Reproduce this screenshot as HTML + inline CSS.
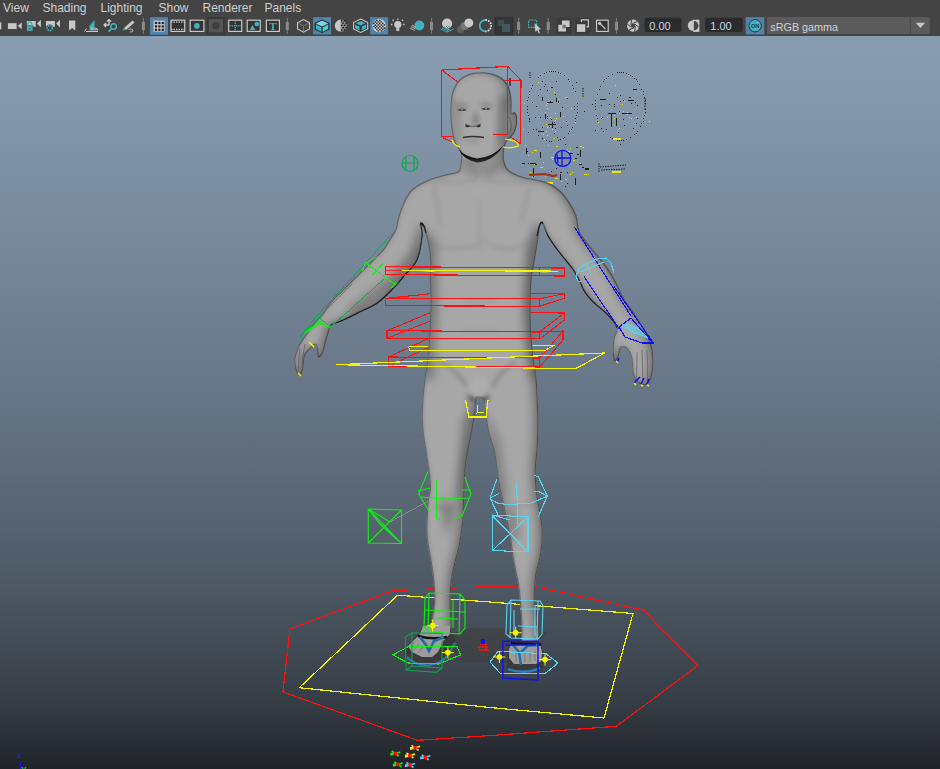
<!DOCTYPE html>
<html><head><meta charset="utf-8"><style>
html,body{margin:0;padding:0;width:940px;height:769px;overflow:hidden;background:#444;}
body{position:relative;font-family:"Liberation Sans",sans-serif;}
#bar{position:absolute;left:0;top:0;width:940px;height:36px;background:#444444;}
.m{position:absolute;top:0px;font-size:12px;color:#cccccc;line-height:14px;}
#vp{position:absolute;left:0;top:36px;width:940px;height:733px;
background:linear-gradient(to bottom,rgb(137,157,178) 0.0%,rgb(132,151,171) 8.3%,rgb(127,145,165) 16.7%,rgb(121,139,157) 25.0%,rgb(115,132,150) 33.3%,rgb(109,125,142) 41.7%,rgb(102,117,133) 50.0%,rgb(94,108,123) 58.3%,rgb(86,99,112) 66.7%,rgb(77,88,100) 75.0%,rgb(66,75,85) 83.3%,rgb(52,59,67) 91.7%,rgb(32,35,40) 100.0%);}
svg{position:absolute;left:0;top:0;}
</style></head><body>
<div id="bar"><svg width="940" height="36" viewBox="0 0 940 36" style="position:absolute;left:0;top:0">
<rect x="0" y="22.3" width="1.3" height="7" fill="#c8c8c8"/>
<rect x="7.9" y="23.2" width="8.7" height="5.8" fill="#c8c8c8"/><path d="M17.9 26.1 L21.7 22.3 L21.7 29.3 Z" fill="#c8c8c8"/>
<rect x="26.8" y="21" width="8.9" height="5.8" fill="#c8c8c8"/><path d="M37 23.6 L40.9 19.7 L40.9 27.4 Z" fill="#c8c8c8"/>
<rect x="26.5" y="25.8" width="6.5" height="5.4" fill="#3fb3c0" stroke="#444444" stroke-width="0.8"/><path d="M27.8 26 L27.8 24 A2 2 0 0 1 31.8 24 L31.8 26" fill="none" stroke="#3fb3c0" stroke-width="1.4"/><rect x="29.2" y="27.8" width="1.2" height="1.6" fill="#444444"/>
<rect x="46" y="21" width="8.9" height="5.8" fill="#c8c8c8"/><path d="M56.2 23.6 L60 19.7 L60 27.4 Z" fill="#c8c8c8"/>
<circle cx="49.8" cy="28" r="3.6" fill="#444444"/><circle cx="49.8" cy="28" r="2.6" fill="none" stroke="#3fb3c0" stroke-width="1.6" stroke-dasharray="1.6 0.8"/>
<path d="M69 20.4 L75.3 20.4 L75.3 30.6 L72.15 28 L69 30.6 Z" fill="#c8c8c8"/>
<path d="M89.5 26 L94.5 20 L94.5 27.5 L89.5 31 Z" fill="#3fb3c0"/><path d="M84.5 31.5 L86.5 28.5 M86 31.5 L98 31.5 M91 29.8 L98 29.8 L96 28.2 L91 28.2" stroke="#c8c8c8" stroke-width="1" fill="none"/>
<path d="M103.5 25 L109 25 M109 20 L109 25 M104 25 L106 23 M104 25 L106 27 M109 19.5 L107 21.5 M109 19.5 L111 21.5" stroke="#c8c8c8" stroke-width="1.4" fill="none"/><circle cx="113.6" cy="26.6" r="2.8" fill="none" stroke="#3fb3c0" stroke-width="1.4"/><path d="M111.6 28.6 L108.5 31.8" stroke="#3fb3c0" stroke-width="1.6"/>
<path d="M124 28 L132.5 20.6 L134.6 22.6 L126 30 Z" fill="#c8c8c8"/><path d="M122.7 30.6 L123.8 28 L126 30 Z" fill="#3fb3c0"/><path d="M128.5 29.5 Q131 28 133 30 Q133 32.5 130 32" fill="none" stroke="#c8c8c8" stroke-width="0.9"/>
<rect x="142.8" y="17.8" width="1.2" height="16" fill="#777"/><rect x="141.9" y="22" width="3" height="8" fill="#8a8a8a"/>
<rect x="150.1" y="17.2" width="17.9" height="17.6" fill="#5285ae"/><rect x="153.6" y="20.6" width="11" height="11" fill="#c8c8c8"/>
<rect x="154.9" y="21.9" width="2.2" height="2.2" fill="#222"/>
<rect x="154.9" y="25.3" width="2.2" height="2.2" fill="#222"/>
<rect x="154.9" y="28.7" width="2.2" height="2.2" fill="#222"/>
<rect x="158.3" y="21.9" width="2.2" height="2.2" fill="#222"/>
<rect x="158.3" y="25.3" width="2.2" height="2.2" fill="#222"/>
<rect x="158.3" y="28.7" width="2.2" height="2.2" fill="#222"/>
<rect x="161.7" y="21.9" width="2.2" height="2.2" fill="#222"/>
<rect x="161.7" y="25.3" width="2.2" height="2.2" fill="#222"/>
<rect x="161.7" y="28.7" width="2.2" height="2.2" fill="#222"/>
<rect x="171" y="20.2" width="13.7" height="11.2" fill="#333" stroke="#c8c8c8" stroke-width="1.2"/><path d="M171 22.2 L184.7 22.2 M171 29.4 L184.7 29.4" stroke="#c8c8c8" stroke-width="1.2" stroke-dasharray="1.5 1"/>
<rect x="190.2" y="20.2" width="13.7" height="11.2" fill="#333" stroke="#c8c8c8" stroke-width="1.2"/><circle cx="196.9" cy="25.9" r="2.8" fill="#3fb3c0"/>
<rect x="206.9" y="17.2" width="17.9" height="17.2" fill="#383838"/><rect x="208.7" y="19.2" width="14.3" height="13.3" fill="#555"/><circle cx="215.9" cy="25.8" r="3.8" fill="#404040"/>
<rect x="228.7" y="20.2" width="13" height="11.2" fill="#333" stroke="#c8c8c8" stroke-width="1.2"/><path d="M229.5 25.8 L241 25.8 M235.2 20.5 L235.2 31" stroke="#3fb3c0" stroke-width="1.4" stroke-dasharray="1.2 1"/>
<rect x="247.2" y="20.2" width="13" height="11.2" fill="#333" stroke="#c8c8c8" stroke-width="1.2"/><path d="M249.5 30 L252.5 25 L255.5 30 Z" fill="#3fb3c0"/><circle cx="256.8" cy="24" r="2.3" fill="#3fb3c0"/>
<rect x="266.4" y="20.2" width="13" height="11.2" fill="#333" stroke="#c8c8c8" stroke-width="1.2"/><text x="272.9" y="30.2" font-family="Liberation Serif" font-weight="bold" font-size="11" fill="#3fb3c0" text-anchor="middle">T</text>
<rect x="286.7" y="17.8" width="1.2" height="16" fill="#777"/><rect x="285.8" y="22" width="3" height="8" fill="#8a8a8a"/>
<path d="M303.5 19.6 L309.5 22.8 L309.5 29 L303.5 32.2 L297.5 29 L297.5 22.8 Z" fill="none" stroke="#c8c8c8" stroke-width="1.1"/><path d="M303.5 26 L303.5 32 M303.5 26 L297.8 23 M303.5 26 L309.3 23" stroke="#888" stroke-width="0.7"/>
<rect x="313.1" y="17.2" width="17.9" height="17.2" fill="#5285ae"/><path d="M322 19.4 L329.5 23 L329.5 29.5 L322 33 L314.6 29.5 L314.6 23 Z" fill="#222"/><path d="M322 20.5 L328.3 23.5 L322 26.5 L315.8 23.5 Z" fill="#7fd6e0"/><path d="M315.8 24.3 L321.5 27.2 L321.5 32 L315.8 29 Z" fill="#3db2c0"/><path d="M322.6 27.2 L328.3 24.3 L328.3 29 L322.6 32 Z" fill="#4ec4d2"/>
<path d="M340.9 19.6 A6.1 6.1 0 0 0 340.9 31.8 Z" fill="#c8c8c8"/><path d="M340.9 19.6 A6.1 6.1 0 0 1 340.9 31.8 Z" fill="#888"/>
<rect x="340.9" y="20.0" width="1.5" height="1.5" fill="#222"/>
<rect x="340.9" y="24.6" width="1.5" height="1.5" fill="#222"/>
<rect x="340.9" y="29.2" width="1.5" height="1.5" fill="#222"/>
<rect x="342.4" y="22.3" width="1.5" height="1.5" fill="#222"/>
<rect x="342.4" y="26.9" width="1.5" height="1.5" fill="#222"/>
<rect x="343.9" y="20.0" width="1.5" height="1.5" fill="#222"/>
<rect x="343.9" y="24.6" width="1.5" height="1.5" fill="#222"/>
<rect x="343.9" y="29.2" width="1.5" height="1.5" fill="#222"/>
<rect x="345.4" y="22.3" width="1.5" height="1.5" fill="#222"/>
<rect x="345.4" y="26.9" width="1.5" height="1.5" fill="#222"/>
<path d="M360.6 19.1 L367.7 22.6 L367.7 29 L360.6 32.5 L353.6 29 L353.6 22.6 Z" fill="#333" stroke="#c8c8c8" stroke-width="1.1"/><path d="M360.6 21 L365.5 23.3 L360.6 25.5 L355.8 23.3 Z" fill="#3fb3c0"/><path d="M355 24.5 L359.5 26.6 L359.5 30.5 L355 28.3 Z" fill="#3fb3c0"/><path d="M361.7 26.6 L366.3 24.5 L366.3 28.3 L361.7 30.5 Z" fill="#3fb3c0"/>
<rect x="370.2" y="17.2" width="17.9" height="17.2" fill="#5285ae"/><circle cx="379.1" cy="25.7" r="6.6" fill="#ddd"/>
<rect x="373.1" y="22.7" width="1.5" height="1.5" fill="#222"/>
<rect x="373.1" y="25.7" width="1.5" height="1.5" fill="#222"/>
<rect x="374.6" y="21.2" width="1.5" height="1.5" fill="#222"/>
<rect x="374.6" y="24.2" width="1.5" height="1.5" fill="#222"/>
<rect x="374.6" y="27.2" width="1.5" height="1.5" fill="#222"/>
<rect x="376.1" y="19.7" width="1.5" height="1.5" fill="#222"/>
<rect x="376.1" y="22.7" width="1.5" height="1.5" fill="#222"/>
<rect x="376.1" y="25.7" width="1.5" height="1.5" fill="#222"/>
<rect x="376.1" y="28.7" width="1.5" height="1.5" fill="#222"/>
<rect x="377.6" y="21.2" width="1.5" height="1.5" fill="#222"/>
<rect x="377.6" y="24.2" width="1.5" height="1.5" fill="#222"/>
<rect x="377.6" y="27.2" width="1.5" height="1.5" fill="#222"/>
<rect x="377.6" y="30.2" width="1.5" height="1.5" fill="#222"/>
<rect x="379.1" y="19.7" width="1.5" height="1.5" fill="#222"/>
<rect x="379.1" y="22.7" width="1.5" height="1.5" fill="#222"/>
<rect x="379.1" y="25.7" width="1.5" height="1.5" fill="#222"/>
<rect x="379.1" y="28.7" width="1.5" height="1.5" fill="#222"/>
<rect x="380.6" y="21.2" width="1.5" height="1.5" fill="#222"/>
<rect x="380.6" y="24.2" width="1.5" height="1.5" fill="#222"/>
<rect x="380.6" y="27.2" width="1.5" height="1.5" fill="#222"/>
<rect x="380.6" y="30.2" width="1.5" height="1.5" fill="#222"/>
<rect x="382.1" y="22.7" width="1.5" height="1.5" fill="#222"/>
<rect x="382.1" y="25.7" width="1.5" height="1.5" fill="#222"/>
<rect x="382.1" y="28.7" width="1.5" height="1.5" fill="#222"/>
<rect x="383.6" y="24.2" width="1.5" height="1.5" fill="#222"/>
<rect x="383.6" y="27.2" width="1.5" height="1.5" fill="#222"/>
<circle cx="397.8" cy="24.5" r="3.6" fill="#c8c8c8"/><rect x="396.3" y="27.5" width="3" height="3.4" fill="#c8c8c8"/><path d="M397.8 18.5 L397.8 19.8 M391 24.5 L392.4 24.5 M403.2 24.5 L404.6 24.5 M392.6 19.8 L393.6 20.8 M403 19.8 L402 20.8" stroke="#c8c8c8" stroke-width="1.3"/>
<circle cx="419.4" cy="25.5" r="4.9" fill="#3fb3c0"/><path d="M410 28 L414.5 30.5 M411 26.5 L415.5 29 M412 25 L416 27.5" stroke="#c8c8c8" stroke-width="0.9"/>
<rect x="430.9" y="17.8" width="1.2" height="16" fill="#777"/><rect x="430.0" y="22" width="3" height="8" fill="#8a8a8a"/>
<circle cx="447.1" cy="23.6" r="5.1" fill="#c8c8c8"/><path d="M446 26 L448 28 M448 25.5 L450 27.5 M444 26.5 L446 28.5" stroke="#555" stroke-width="0.8"/><path d="M440.5 29 L447 32 L453.5 29 M442 28 L448.5 31 M444 27.5 L450.5 30.5" stroke="#3fb3c0" stroke-width="0.9" fill="none"/>
<circle cx="460.5" cy="29.5" r="3.7" fill="#5e5e5e"/><circle cx="464.5" cy="26" r="4" fill="#777"/><circle cx="468.8" cy="22.9" r="4.5" fill="#c8c8c8"/>
<path d="M485.4 20 A5.7 5.7 0 0 0 485.4 31.4" fill="none" stroke="#3fb3c0" stroke-width="1.8"/><path d="M485.4 20 A5.7 5.7 0 0 1 485.4 31.4" fill="none" stroke="#eee" stroke-width="1.8" stroke-dasharray="1.6 1.1"/>
<rect x="495" y="17.2" width="17.9" height="17.2" fill="#353535" stroke="#2e2e2e" stroke-width="0.8"/><rect x="498" y="20" width="6" height="6" fill="#3b5254"/><rect x="502" y="24" width="8" height="8" fill="#42595c"/>
<rect x="518.0" y="17.8" width="1.2" height="16" fill="#777"/><rect x="517.1" y="22" width="3" height="8" fill="#8a8a8a"/>
<rect x="528.6" y="20" width="8" height="7.4" fill="none" stroke="#3fb3c0" stroke-width="1.2" stroke-dasharray="1.8 1"/><path d="M534.6 22.9 L541 29.3 L538.5 29.5 L540 33 L538.8 33.5 L537.3 30.2 L535.3 31.8 Z" fill="#c8c8c8"/>
<rect x="547.6" y="17.8" width="1.2" height="16" fill="#777"/><rect x="546.7" y="22" width="3" height="8" fill="#8a8a8a"/>
<rect x="556.5" y="17.8" width="15.3" height="16" fill="#3b3b3b"/><path d="M562 20.4 L569.6 20.4 L569.6 27 L566 27 L566 31.5 L558.3 31.5 L558.3 24.8 L562 24.8 Z" fill="#c8c8c8"/><rect x="562.4" y="24.8" width="3.6" height="3.6" fill="#777"/>
<rect x="575" y="17.8" width="15.3" height="16" fill="#3b3b3b"/><rect x="576.9" y="24.2" width="8.4" height="7.7" fill="#c8c8c8"/><path d="M581.4 22 L581.4 19.8 L588.4 19.8 L588.4 26.8 L586.3 26.8" fill="none" stroke="#c8c8c8" stroke-width="1.2"/>
<rect x="596.6" y="20.2" width="11.6" height="11.2" fill="#333" stroke="#c8c8c8" stroke-width="1.2"/><circle cx="599.7" cy="23.3" r="1.6" fill="#c8c8c8"/><path d="M600 23.6 L605.5 29" stroke="#c8c8c8" stroke-width="1.3"/>
<rect x="615.9" y="17.8" width="1.2" height="16" fill="#777"/><rect x="615.0" y="22" width="3" height="8" fill="#8a8a8a"/>
<circle cx="633.1" cy="25.7" r="6.1" fill="#c8c8c8"/>
<path d="M635.32 26.30 L634.68 31.59" stroke="#3a3a3a" stroke-width="1"/>
<path d="M633.70 27.92 L628.79 30.01" stroke="#3a3a3a" stroke-width="1"/>
<path d="M631.47 27.33 L627.21 24.12" stroke="#3a3a3a" stroke-width="1"/>
<path d="M630.88 25.10 L631.52 19.81" stroke="#3a3a3a" stroke-width="1"/>
<path d="M632.50 23.48 L637.41 21.39" stroke="#3a3a3a" stroke-width="1"/>
<path d="M634.73 24.07 L638.99 27.28" stroke="#3a3a3a" stroke-width="1"/>
<path d="M635.32 26.30 L633.70 27.92 L631.47 27.33 L630.88 25.10 L632.50 23.48 L634.73 24.07 Z" fill="#444"/>
<rect x="644.5" y="17.8" width="37" height="14.1" rx="2" fill="#2b2b2b"/><rect x="705.1" y="17.8" width="37.7" height="14.1" rx="2" fill="#2b2b2b"/>
<path d="M693 20.3 A5.2 5.2 0 0 0 693 30.7 Z" fill="#c8c8c8"/><rect x="693" y="19.7" width="6.4" height="12.2" fill="#c8c8c8"/><path d="M693.8 21 A4.6 4.6 0 0 1 693.8 30.4 Z" fill="#444444"/>
<rect x="745.7" y="17.2" width="18.6" height="17.2" fill="#5285ae"/><circle cx="755.1" cy="25.7" r="6.2" fill="#3fb3c0" stroke="#333" stroke-width="1"/><text x="755.1" y="28" font-family="Liberation Sans" font-weight="bold" font-size="5.5" fill="#1d3a40" text-anchor="middle">ON</text>
<rect x="766.8" y="17" width="163" height="17" rx="2" fill="#5b5b5b"/><rect x="909.7" y="17" width="1.2" height="17" fill="#4a4a4a"/><path d="M915.7 22.8 L925.1 22.8 L920.4 28.1 Z" fill="#c8c8c8"/>
<g font-family="Liberation Sans" fill="#cfcfcf" font-size="12"><text x="3" y="11.8">View</text><text x="42.5" y="11.8">Shading</text><text x="100.5" y="11.8">Lighting</text><text x="158.5" y="11.8">Show</text><text x="202.5" y="11.8">Renderer</text><text x="264.5" y="11.8">Panels</text></g>
<g font-family="Liberation Sans" fill="#c8d8e8" font-size="11"><text x="649.3" y="30">0.00</text><text x="710.3" y="30">1.00</text></g>
<text x="770.3" y="30.7" font-family="Liberation Sans" fill="#d2d2d2" font-size="10.8">sRGB gamma</text>
</svg></div>
<div id="vp"></div>
<svg width="940" height="769" viewBox="0 0 940 769">
<defs>
<filter id="inner" x="-10%" y="-10%" width="120%" height="120%">
<feGaussianBlur in="SourceAlpha" stdDeviation="2.5" result="b"/>
<feComposite in="SourceAlpha" in2="b" operator="out" result="edge"/>
<feFlood flood-color="#303030" flood-opacity="0.6"/>
<feComposite in2="edge" operator="in" result="sh"/>
<feGaussianBlur in="SourceAlpha" stdDeviation="5" result="b2"/>
<feOffset in="b2" dx="-6" dy="-1" result="o2"/>
<feComposite in="SourceAlpha" in2="o2" operator="out" result="edge2"/>
<feFlood flood-color="#2a2a2a" flood-opacity="0.55"/>
<feComposite in2="edge2" operator="in" result="sh2"/>
<feMorphology in="SourceAlpha" operator="erode" radius="0.7" result="er"/>
<feComposite in="SourceAlpha" in2="er" operator="out" result="edge3"/>
<feFlood flood-color="#151515" flood-opacity="0.55"/>
<feComposite in2="edge3" operator="in" result="sh3"/>
<feMerge><feMergeNode in="SourceGraphic"/><feMergeNode in="sh"/><feMergeNode in="sh2"/><feMergeNode in="sh3"/></feMerge>
</filter>
<filter id="blur2" x="-50%" y="-50%" width="200%" height="200%"><feGaussianBlur stdDeviation="2"/></filter>
<filter id="blur4" x="-50%" y="-50%" width="200%" height="200%"><feGaussianBlur stdDeviation="4"/></filter>
<clipPath id="bclip"><path d="M480.6 72.3 C484.9 72.2 489.4 72.8 493.0 73.8 C496.6 74.8 499.9 76.5 502.5 78.5 C505.1 80.5 507.1 83.1 508.5 86.0 C509.9 88.9 510.5 92.8 511.0 96.0 C511.5 99.2 511.4 102.2 511.5 105.0 C511.6 107.8 511.0 111.8 511.5 113.0 C512.0 114.2 513.6 111.3 514.5 112.0 C515.4 112.7 516.7 114.5 517.0 117.0 C517.3 119.5 517.2 124.0 516.5 127.0 C515.8 130.0 514.6 132.7 513.0 135.0 C511.4 137.3 508.5 138.5 507.0 141.0 C505.5 143.5 504.4 146.5 504.0 150.0 C503.6 153.5 503.5 158.5 504.5 162.0 C505.5 165.5 506.8 168.5 510.0 171.0 C513.2 173.5 518.0 175.2 524.0 177.0 C530.0 178.8 540.1 179.8 546.0 182.0 C551.9 184.2 555.7 186.8 559.5 190.0 C563.3 193.2 565.9 196.7 568.7 201.0 C571.5 205.3 574.7 210.6 576.5 215.6 C578.3 220.6 577.3 226.0 579.6 231.2 C581.9 236.4 586.1 241.1 590.5 246.8 C594.9 252.5 601.8 259.8 606.0 265.5 C610.2 271.2 612.4 275.3 615.5 281.0 C618.6 286.7 621.5 294.3 624.8 299.8 C628.0 305.3 631.3 308.3 635.0 314.0 C638.7 319.7 644.2 328.5 647.0 334.0 C649.8 339.5 650.9 342.2 652.0 347.0 C653.1 351.8 653.5 358.3 653.5 363.0 C653.5 367.7 652.9 371.5 652.0 375.0 C651.1 378.5 649.5 382.3 648.0 384.0 C646.5 385.7 644.6 385.2 643.0 385.0 C641.4 384.8 640.1 384.5 638.5 383.0 C636.9 381.5 634.8 380.3 633.5 376.0 C632.2 371.7 632.3 361.7 631.0 357.0 C629.7 352.3 627.2 349.5 625.5 348.0 C623.8 346.5 622.2 346.5 621.0 348.0 C619.8 349.5 619.5 354.7 618.5 357.0 C617.5 359.3 616.0 362.5 615.0 362.0 C614.0 361.5 613.0 358.0 612.8 354.0 C612.5 350.0 612.9 342.3 613.5 338.0 C614.1 333.7 617.5 331.8 616.5 328.0 C615.5 324.2 611.5 319.6 607.7 315.4 C603.9 311.2 597.5 306.9 593.6 303.0 C589.7 299.1 586.7 295.7 584.3 292.0 C581.9 288.3 581.1 284.9 579.0 281.0 C576.9 277.1 575.1 273.3 571.8 268.6 C568.5 263.9 563.2 258.2 559.3 253.0 C555.4 247.8 551.4 242.4 548.4 237.4 C545.4 232.4 543.3 221.9 541.5 223.0 C539.7 224.1 538.8 237.0 537.5 244.0 C536.2 251.0 535.0 259.0 534.0 265.0 C533.0 271.0 532.0 274.2 531.5 280.0 C531.0 285.8 530.8 291.7 530.7 300.0 C530.6 308.3 530.5 320.0 531.0 330.0 C531.5 340.0 532.9 352.0 533.8 360.0 C534.7 368.0 535.8 369.0 536.5 378.0 C537.2 387.0 538.0 404.8 538.3 414.0 C538.6 423.2 538.4 426.8 538.3 433.0 C538.1 439.2 537.8 445.0 537.4 451.0 C537.0 457.0 535.9 463.0 535.8 469.0 C535.6 475.0 536.0 481.5 536.5 487.0 C537.0 492.5 537.5 495.2 538.5 502.0 C539.5 508.8 542.0 519.5 542.5 528.0 C543.0 536.5 542.5 544.8 541.4 553.0 C540.3 561.2 537.1 569.0 536.0 577.0 C534.9 585.0 534.6 593.3 534.8 601.0 C535.0 608.7 536.2 615.2 537.0 623.0 C537.8 630.8 540.7 643.2 539.5 648.0 C538.3 652.8 533.0 652.0 530.0 652.0 C527.0 652.0 522.9 651.7 521.5 648.0 C520.1 644.3 521.8 636.7 521.6 630.0 C521.4 623.3 521.0 615.3 520.4 608.0 C519.8 600.7 519.3 593.3 518.2 586.0 C517.1 578.7 515.3 572.5 513.8 564.0 C512.3 555.5 511.1 544.5 509.4 535.0 C507.7 525.5 505.1 514.8 503.5 507.0 C501.9 499.2 500.7 494.3 499.5 488.0 C498.3 481.7 497.5 475.2 496.5 469.0 C495.5 462.8 495.1 457.0 493.7 451.0 C492.3 445.0 489.8 439.5 488.3 433.0 C486.9 426.5 485.8 417.5 485.0 412.0 C484.2 406.5 484.3 402.4 483.5 400.0 C482.7 397.6 481.2 397.7 480.0 397.5 C478.8 397.3 477.3 396.2 476.5 399.0 C475.7 401.8 475.8 408.3 475.0 414.0 C474.2 419.7 473.0 426.8 471.9 433.0 C470.8 439.2 469.4 445.0 468.3 451.0 C467.2 457.0 466.1 463.0 465.5 469.0 C464.9 475.0 464.9 481.5 464.6 487.0 C464.4 492.5 464.3 495.8 464.0 502.0 C463.7 508.2 463.7 516.7 463.0 524.0 C462.3 531.3 461.2 538.7 459.7 546.0 C458.2 553.3 455.7 560.7 454.2 568.0 C452.7 575.3 451.4 582.7 450.9 590.0 C450.3 597.3 450.7 604.7 450.9 612.0 C451.1 619.3 452.3 628.3 452.0 634.0 C451.7 639.7 451.3 643.5 449.0 646.0 C446.7 648.5 442.0 649.2 438.0 649.0 C434.0 648.8 426.2 649.3 425.0 645.0 C423.8 640.7 429.4 630.3 431.0 623.0 C432.6 615.7 433.9 608.3 434.3 601.0 C434.7 593.7 433.9 586.3 433.2 579.0 C432.5 571.7 431.0 564.3 429.9 557.0 C428.8 549.7 427.0 544.2 426.6 535.0 C426.2 525.8 427.1 510.0 427.7 502.0 C428.3 494.0 429.9 492.5 430.0 487.0 C430.1 481.5 428.9 475.0 428.2 469.0 C427.4 463.0 426.4 457.0 425.5 451.0 C424.6 445.0 423.3 439.2 422.7 433.0 C422.1 426.8 421.8 420.2 421.8 414.0 C421.8 407.8 422.2 402.0 422.7 396.0 C423.2 390.0 423.8 384.0 424.6 378.0 C425.4 372.0 426.5 368.0 427.3 360.0 C428.1 352.0 429.0 340.0 429.6 330.0 C430.2 320.0 430.6 308.3 430.7 300.0 C430.8 291.7 430.0 285.8 429.9 280.0 C429.8 274.2 430.4 269.8 430.3 265.0 C430.2 260.2 429.9 256.0 429.2 251.0 C428.5 246.0 427.4 239.6 426.0 235.0 C424.6 230.4 421.6 223.3 421.0 223.5 C420.4 223.7 423.1 229.9 422.5 236.0 C421.9 242.1 420.3 253.4 417.4 260.0 C414.5 266.6 409.1 270.8 404.9 275.8 C400.7 280.8 397.1 285.2 392.4 289.9 C387.7 294.6 382.0 300.4 376.8 304.0 C371.6 307.6 366.4 309.1 361.2 311.7 C356.0 314.3 350.6 317.2 345.6 319.5 C340.6 321.8 334.1 323.6 331.4 325.4 C328.7 327.1 330.4 327.2 329.5 330.0 C328.6 332.8 327.1 338.0 326.0 342.0 C324.9 346.0 323.9 351.5 322.6 354.0 C321.3 356.5 319.1 358.5 318.0 357.0 C316.9 355.5 317.3 346.3 316.0 345.0 C314.7 343.7 312.2 347.2 310.4 349.0 C308.6 350.8 306.2 352.8 305.0 356.0 C303.8 359.2 303.9 365.2 303.2 368.5 C302.4 371.8 301.5 374.7 300.5 375.5 C299.5 376.3 298.0 375.4 297.0 373.5 C296.0 371.6 294.7 367.1 294.4 364.0 C294.1 360.9 294.2 358.3 295.0 355.0 C295.8 351.7 297.7 347.3 299.4 344.0 C301.1 340.7 302.6 338.9 305.0 335.4 C307.4 331.9 310.7 326.9 313.7 323.2 C316.7 319.5 320.3 316.5 323.0 313.0 C325.7 309.5 325.4 307.6 330.0 302.4 C334.6 297.2 343.8 288.5 350.3 282.0 C356.8 275.5 363.8 268.6 369.0 263.4 C374.2 258.2 378.2 254.9 381.5 251.0 C384.8 247.1 386.7 243.7 389.0 240.0 C391.3 236.3 394.0 232.7 395.5 229.0 C397.0 225.3 396.9 221.8 398.0 218.0 C399.1 214.2 400.3 210.1 402.0 206.0 C403.7 201.9 405.9 196.8 408.4 193.4 C410.9 190.0 412.9 188.1 417.0 185.5 C421.1 182.9 427.8 179.9 433.0 178.0 C438.2 176.1 443.7 175.2 448.0 174.0 C452.3 172.8 456.5 172.8 458.6 171.0 C460.7 169.2 460.1 166.0 460.5 163.0 C460.9 160.0 461.7 156.1 460.8 153.0 C459.9 149.9 456.8 147.8 455.3 144.4 C453.8 141.0 452.8 137.4 452.0 132.6 C451.2 127.8 450.7 121.1 450.5 115.7 C450.3 110.3 450.5 104.5 451.0 100.0 C451.5 95.5 452.2 92.2 453.5 89.0 C454.8 85.8 456.2 82.9 458.5 80.5 C460.8 78.1 463.8 75.9 467.5 74.5 C471.2 73.1 476.4 72.4 480.6 72.3 Z"/></clipPath>
</defs>
<path d="M393.0 590.5 L490.0 586.5 L536.8 587.0 L644.5 610.4 L656.0 623.3 L697.8 665.4 L616.4 726.3 L490.0 735.6 L417.4 740.3 L282.9 691.9 L289.9 629.0 Z" fill="none" stroke="#ff1010" stroke-width="1.2" shape-rendering="crispEdges" />
<path d="M397.5 595.2 L490.0 602.0 L633.0 613.5 L604.0 718.0 L490.0 707.5 L299.3 687.7 Z" fill="none" stroke="#f5f500" stroke-width="1.2" shape-rendering="crispEdges" />
<path d="M443 637 L472 627 L548 632 L520 662 L470 663 L455 660 Z" fill="#3e3e3e" opacity="0.55"/><path d="M455 655 L480 633 M465 658 L492 634 M478 660 L505 636 M492 661 L520 637" stroke="#4a4a4a" stroke-width="0.6" stroke-dasharray="2 2"/>
<rect x="577" y="106" width="1" height="1" fill="#1c1c1c"/>
<rect x="577" y="109" width="1" height="1" fill="#1c1c1c"/>
<rect x="577" y="112" width="1" height="1" fill="#1c1c1c"/>
<rect x="576" y="115" width="1" height="1" fill="#1c1c1c"/>
<rect x="575" y="118" width="1" height="1" fill="#1c1c1c"/>
<rect x="575" y="121" width="1" height="1" fill="#1c1c1c"/>
<rect x="572" y="127" width="1" height="1" fill="#1c1c1c"/>
<rect x="571" y="129" width="1" height="1" fill="#1c1c1c"/>
<rect x="569" y="131" width="1" height="1" fill="#1c1c1c"/>
<rect x="568" y="133" width="1" height="1" fill="#1c1c1c"/>
<rect x="564" y="137" width="1" height="1" fill="#1c1c1c"/>
<rect x="560" y="139" width="1" height="1" fill="#1c1c1c"/>
<rect x="558" y="140" width="1" height="1" fill="#1c1c1c"/>
<rect x="551" y="141" width="1" height="1" fill="#1c1c1c"/>
<rect x="549" y="141" width="1" height="1" fill="#1c1c1c"/>
<rect x="546" y="140" width="1" height="1" fill="#1c1c1c"/>
<rect x="542" y="138" width="1" height="1" fill="#1c1c1c"/>
<rect x="538" y="135" width="1" height="1" fill="#1c1c1c"/>
<rect x="533" y="129" width="1" height="1" fill="#1c1c1c"/>
<rect x="529" y="121" width="1" height="1" fill="#1c1c1c"/>
<rect x="529" y="118" width="1" height="1" fill="#1c1c1c"/>
<rect x="528" y="115" width="1" height="1" fill="#1c1c1c"/>
<rect x="527" y="112" width="1" height="1" fill="#1c1c1c"/>
<rect x="527" y="109" width="1" height="1" fill="#1c1c1c"/>
<rect x="527" y="106" width="1" height="1" fill="#1c1c1c"/>
<rect x="527" y="100" width="1" height="1" fill="#1c1c1c"/>
<rect x="528" y="97" width="1" height="1" fill="#1c1c1c"/>
<rect x="529" y="94" width="1" height="1" fill="#1c1c1c"/>
<rect x="529" y="91" width="1" height="1" fill="#1c1c1c"/>
<rect x="531" y="88" width="1" height="1" fill="#1c1c1c"/>
<rect x="532" y="85" width="1" height="1" fill="#1c1c1c"/>
<rect x="538" y="77" width="1" height="1" fill="#1c1c1c"/>
<rect x="540" y="75" width="1" height="1" fill="#1c1c1c"/>
<rect x="544" y="73" width="1" height="1" fill="#1c1c1c"/>
<rect x="546" y="72" width="1" height="1" fill="#1c1c1c"/>
<rect x="549" y="71" width="1" height="1" fill="#1c1c1c"/>
<rect x="551" y="71" width="1" height="1" fill="#1c1c1c"/>
<rect x="553" y="71" width="1" height="1" fill="#1c1c1c"/>
<rect x="555" y="71" width="1" height="1" fill="#1c1c1c"/>
<rect x="558" y="72" width="1" height="1" fill="#1c1c1c"/>
<rect x="560" y="73" width="1" height="1" fill="#1c1c1c"/>
<rect x="564" y="75" width="1" height="1" fill="#1c1c1c"/>
<rect x="568" y="79" width="1" height="1" fill="#1c1c1c"/>
<rect x="569" y="81" width="1" height="1" fill="#1c1c1c"/>
<rect x="572" y="85" width="1" height="1" fill="#1c1c1c"/>
<rect x="573" y="88" width="1" height="1" fill="#1c1c1c"/>
<rect x="575" y="91" width="1" height="1" fill="#1c1c1c"/>
<rect x="577" y="103" width="1" height="1" fill="#1c1c1c"/>
<rect x="645" y="109" width="1" height="1" fill="#1c1c1c"/>
<rect x="645" y="112" width="1" height="1" fill="#1c1c1c"/>
<rect x="644" y="115" width="1" height="1" fill="#1c1c1c"/>
<rect x="643" y="118" width="1" height="1" fill="#1c1c1c"/>
<rect x="643" y="121" width="1" height="1" fill="#1c1c1c"/>
<rect x="641" y="123" width="1" height="1" fill="#1c1c1c"/>
<rect x="640" y="126" width="1" height="1" fill="#1c1c1c"/>
<rect x="637" y="131" width="1" height="1" fill="#1c1c1c"/>
<rect x="636" y="133" width="1" height="1" fill="#1c1c1c"/>
<rect x="634" y="134" width="1" height="1" fill="#1c1c1c"/>
<rect x="630" y="137" width="1" height="1" fill="#1c1c1c"/>
<rect x="626" y="139" width="1" height="1" fill="#1c1c1c"/>
<rect x="623" y="140" width="1" height="1" fill="#1c1c1c"/>
<rect x="621" y="140" width="1" height="1" fill="#1c1c1c"/>
<rect x="619" y="140" width="1" height="1" fill="#1c1c1c"/>
<rect x="617" y="140" width="1" height="1" fill="#1c1c1c"/>
<rect x="614" y="139" width="1" height="1" fill="#1c1c1c"/>
<rect x="612" y="138" width="1" height="1" fill="#1c1c1c"/>
<rect x="610" y="137" width="1" height="1" fill="#1c1c1c"/>
<rect x="603" y="131" width="1" height="1" fill="#1c1c1c"/>
<rect x="601" y="128" width="1" height="1" fill="#1c1c1c"/>
<rect x="597" y="121" width="1" height="1" fill="#1c1c1c"/>
<rect x="597" y="118" width="1" height="1" fill="#1c1c1c"/>
<rect x="596" y="115" width="1" height="1" fill="#1c1c1c"/>
<rect x="595" y="109" width="1" height="1" fill="#1c1c1c"/>
<rect x="595" y="106" width="1" height="1" fill="#1c1c1c"/>
<rect x="595" y="103" width="1" height="1" fill="#1c1c1c"/>
<rect x="595" y="100" width="1" height="1" fill="#1c1c1c"/>
<rect x="597" y="94" width="1" height="1" fill="#1c1c1c"/>
<rect x="599" y="89" width="1" height="1" fill="#1c1c1c"/>
<rect x="600" y="86" width="1" height="1" fill="#1c1c1c"/>
<rect x="603" y="81" width="1" height="1" fill="#1c1c1c"/>
<rect x="604" y="79" width="1" height="1" fill="#1c1c1c"/>
<rect x="606" y="78" width="1" height="1" fill="#1c1c1c"/>
<rect x="608" y="76" width="1" height="1" fill="#1c1c1c"/>
<rect x="612" y="74" width="1" height="1" fill="#1c1c1c"/>
<rect x="617" y="72" width="1" height="1" fill="#1c1c1c"/>
<rect x="619" y="72" width="1" height="1" fill="#1c1c1c"/>
<rect x="621" y="72" width="1" height="1" fill="#1c1c1c"/>
<rect x="623" y="72" width="1" height="1" fill="#1c1c1c"/>
<rect x="626" y="73" width="1" height="1" fill="#1c1c1c"/>
<rect x="628" y="74" width="1" height="1" fill="#1c1c1c"/>
<rect x="630" y="75" width="1" height="1" fill="#1c1c1c"/>
<rect x="632" y="76" width="1" height="1" fill="#1c1c1c"/>
<rect x="634" y="78" width="1" height="1" fill="#1c1c1c"/>
<rect x="636" y="79" width="1" height="1" fill="#1c1c1c"/>
<rect x="637" y="81" width="1" height="1" fill="#1c1c1c"/>
<rect x="639" y="84" width="1" height="1" fill="#1c1c1c"/>
<rect x="641" y="89" width="1" height="1" fill="#1c1c1c"/>
<rect x="643" y="91" width="1" height="1" fill="#1c1c1c"/>
<rect x="643" y="94" width="1" height="1" fill="#1c1c1c"/>
<rect x="644" y="97" width="1" height="1" fill="#1c1c1c"/>
<rect x="645" y="100" width="1" height="1" fill="#1c1c1c"/>
<rect x="645" y="103" width="1" height="1" fill="#1c1c1c"/>
<rect x="561" y="127" width="1" height="1" fill="#1c1c1c"/>
<rect x="558" y="102" width="1" height="1" fill="#1c1c1c"/>
<rect x="555" y="120" width="1" height="1" fill="#1c1c1c"/>
<rect x="532" y="102" width="1" height="1" fill="#1c1c1c"/>
<rect x="549" y="126" width="1" height="1" fill="#1c1c1c"/>
<rect x="567" y="98" width="1" height="1" fill="#1c1c1c"/>
<rect x="542" y="81" width="1" height="1" fill="#1c1c1c"/>
<rect x="538" y="95" width="1" height="1" fill="#1c1c1c"/>
<rect x="529" y="119" width="1" height="1" fill="#1c1c1c"/>
<rect x="558" y="101" width="1" height="1" fill="#1c1c1c"/>
<rect x="550" y="101" width="1" height="1" fill="#1c1c1c"/>
<rect x="528" y="132" width="1" height="1" fill="#1c1c1c"/>
<rect x="584" y="111" width="1" height="1" fill="#1c1c1c"/>
<rect x="547" y="90" width="1" height="1" fill="#1c1c1c"/>
<rect x="566" y="121" width="1" height="1" fill="#1c1c1c"/>
<rect x="546" y="124" width="1" height="1" fill="#e6e000"/>
<rect x="555" y="120" width="1" height="1" fill="#e6e000"/>
<rect x="535" y="117" width="1" height="1" fill="#1c1c1c"/>
<rect x="538" y="82" width="1" height="1" fill="#e6e000"/>
<rect x="536" y="106" width="1" height="1" fill="#1c1c1c"/>
<rect x="556" y="118" width="1" height="1" fill="#e6e000"/>
<rect x="571" y="108" width="1" height="1" fill="#e6e000"/>
<rect x="559" y="99" width="1" height="1" fill="#e6e000"/>
<rect x="554" y="92" width="1" height="1" fill="#e6e000"/>
<rect x="540" y="117" width="1" height="1" fill="#1c1c1c"/>
<rect x="555" y="94" width="1" height="1" fill="#1c1c1c"/>
<rect x="565" y="97" width="1" height="1" fill="#e6e000"/>
<rect x="552" y="87" width="1" height="1" fill="#1c1c1c"/>
<rect x="550" y="117" width="1" height="1" fill="#e6e000"/>
<rect x="555" y="113" width="1" height="1" fill="#e6e000"/>
<rect x="523" y="129" width="1" height="1" fill="#e6e000"/>
<rect x="536" y="129" width="1" height="1" fill="#1c1c1c"/>
<rect x="547" y="116" width="1" height="1" fill="#1c1c1c"/>
<rect x="557" y="137" width="1" height="1" fill="#1c1c1c"/>
<rect x="543" y="134" width="1" height="1" fill="#e6e000"/>
<rect x="544" y="86" width="1" height="1" fill="#1c1c1c"/>
<rect x="547" y="118" width="1" height="1" fill="#1c1c1c"/>
<rect x="547" y="103" width="1" height="1" fill="#e6e000"/>
<rect x="554" y="138" width="1" height="1" fill="#e6e000"/>
<rect x="563" y="138" width="1" height="1" fill="#1c1c1c"/>
<rect x="544" y="139" width="1" height="1" fill="#e6e000"/>
<rect x="546" y="105" width="1" height="1" fill="#e6e000"/>
<rect x="567" y="97" width="1" height="1" fill="#e6e000"/>
<rect x="551" y="87" width="1" height="1" fill="#1c1c1c"/>
<rect x="542" y="127" width="1" height="1" fill="#1c1c1c"/>
<rect x="556" y="81" width="1" height="1" fill="#1c1c1c"/>
<rect x="547" y="127" width="1" height="1" fill="#e6e000"/>
<rect x="582" y="96" width="1" height="1" fill="#e6e000"/>
<rect x="563" y="116" width="1" height="1" fill="#e6e000"/>
<rect x="551" y="119" width="1" height="1" fill="#1c1c1c"/>
<rect x="552" y="126" width="1" height="1" fill="#e6e000"/>
<rect x="545" y="112" width="1" height="1" fill="#e6e000"/>
<rect x="547" y="108" width="1" height="1" fill="#e6e000"/>
<rect x="567" y="125" width="1" height="1" fill="#1c1c1c"/>
<rect x="562" y="107" width="1" height="1" fill="#1c1c1c"/>
<rect x="554" y="133" width="1" height="1" fill="#1c1c1c"/>
<rect x="574" y="106" width="1" height="1" fill="#1c1c1c"/>
<rect x="554" y="122" width="1" height="1" fill="#1c1c1c"/>
<rect x="524" y="103" width="1" height="1" fill="#e6e000"/>
<rect x="555" y="131" width="1" height="1" fill="#e6e000"/>
<rect x="545" y="84" width="1" height="1" fill="#1c1c1c"/>
<rect x="575" y="122" width="1" height="1" fill="#e6e000"/>
<rect x="547" y="135" width="1" height="1" fill="#e6e000"/>
<rect x="574" y="109" width="1" height="1" fill="#1c1c1c"/>
<rect x="540" y="89" width="1" height="1" fill="#1c1c1c"/>
<rect x="552" y="129" width="1" height="1" fill="#e6e000"/>
<rect x="555" y="128" width="1" height="1" fill="#1c1c1c"/>
<rect x="576" y="82" width="1" height="1" fill="#1c1c1c"/>
<rect x="598" y="122" width="1" height="1" fill="#e6e000"/>
<rect x="546" y="131" width="1" height="1" fill="#e6e000"/>
<rect x="542" y="97" width="1" height="4" fill="#1c1c1c"/>
<rect x="547" y="102" width="6" height="1" fill="#1c1c1c"/>
<rect x="556" y="98" width="1" height="4" fill="#1c1c1c"/>
<rect x="545" y="114" width="1" height="5" fill="#1c1c1c"/>
<rect x="560" y="112" width="1" height="5" fill="#1c1c1c"/>
<rect x="548" y="124" width="8" height="1" fill="#1c1c1c"/>
<rect x="552" y="122" width="1" height="6" fill="#1c1c1c"/>
<rect x="538" y="131" width="6" height="1" fill="#1c1c1c"/>
<rect x="565" y="186" width="1" height="1" fill="#1c1c1c"/>
<rect x="588" y="174" width="1" height="1" fill="#e6e000"/>
<rect x="562" y="160" width="1" height="1" fill="#e6e000"/>
<rect x="525" y="145" width="1" height="1" fill="#e6e000"/>
<rect x="540" y="167" width="3" height="1" fill="#e6e000"/>
<rect x="580" y="146" width="2" height="1" fill="#e6e000"/>
<rect x="567" y="163" width="2" height="1" fill="#e6e000"/>
<rect x="582" y="147" width="2" height="1" fill="#e6e000"/>
<rect x="582" y="167" width="2" height="1" fill="#1c1c1c"/>
<rect x="526" y="151" width="2" height="1" fill="#1c1c1c"/>
<rect x="556" y="146" width="2" height="1" fill="#e6e000"/>
<rect x="552" y="159" width="1" height="1" fill="#e6e000"/>
<rect x="565" y="144" width="1" height="1" fill="#1c1c1c"/>
<rect x="579" y="164" width="3" height="1" fill="#1c1c1c"/>
<rect x="580" y="163" width="1" height="1" fill="#e6e000"/>
<rect x="558" y="158" width="3" height="1" fill="#1c1c1c"/>
<rect x="567" y="151" width="3" height="1" fill="#e6e000"/>
<rect x="576" y="147" width="2" height="1" fill="#1c1c1c"/>
<rect x="577" y="154" width="2" height="1" fill="#1c1c1c"/>
<rect x="575" y="158" width="2" height="1" fill="#1c1c1c"/>
<rect x="565" y="179" width="2" height="1" fill="#e6e000"/>
<rect x="556" y="168" width="1" height="1" fill="#1c1c1c"/>
<rect x="548" y="145" width="1" height="1" fill="#e6e000"/>
<rect x="535" y="164" width="2" height="1" fill="#1c1c1c"/>
<rect x="522" y="163" width="3" height="1" fill="#1c1c1c"/>
<rect x="543" y="162" width="1" height="1" fill="#e6e000"/>
<rect x="527" y="182" width="3" height="1" fill="#1c1c1c"/>
<rect x="532" y="152" width="1" height="1" fill="#e6e000"/>
<rect x="572" y="172" width="1" height="1" fill="#e6e000"/>
<rect x="545" y="176" width="1" height="1" fill="#e6e000"/>
<rect x="567" y="172" width="1" height="1" fill="#1c1c1c"/>
<rect x="530" y="172" width="1" height="1" fill="#e6e000"/>
<rect x="570" y="148" width="1" height="1" fill="#e6e000"/>
<rect x="560" y="172" width="2" height="1" fill="#1c1c1c"/>
<rect x="567" y="149" width="1" height="1" fill="#e6e000"/>
<rect x="570" y="174" width="1" height="1" fill="#e6e000"/>
<rect x="534" y="150" width="3" height="1" fill="#e6e000"/>
<rect x="570" y="153" width="3" height="1" fill="#1c1c1c"/>
<rect x="573" y="160" width="2" height="1" fill="#e6e000"/>
<rect x="584" y="174" width="3" height="1" fill="#e6e000"/>
<rect x="528" y="163" width="1" height="1" fill="#1c1c1c"/>
<rect x="555" y="178" width="3" height="1" fill="#e6e000"/>
<rect x="551" y="171" width="1" height="1" fill="#1c1c1c"/>
<rect x="534" y="164" width="1" height="1" fill="#e6e000"/>
<rect x="528" y="155" width="1" height="1" fill="#e6e000"/>
<rect x="561" y="181" width="1" height="1" fill="#e6e000"/>
<rect x="551" y="157" width="3" height="1" fill="#e6e000"/>
<rect x="556" y="146" width="2" height="1" fill="#e6e000"/>
<rect x="567" y="183" width="1" height="1" fill="#1c1c1c"/>
<rect x="531" y="163" width="2" height="1" fill="#1c1c1c"/>
<rect x="526" y="148" width="1" height="6" fill="#1c1c1c"/>
<rect x="540" y="152" width="1" height="6" fill="#1c1c1c"/>
<rect x="580" y="150" width="1" height="7" fill="#1c1c1c"/>
<rect x="530" y="163" width="6" height="1" fill="#1c1c1c"/>
<rect x="533" y="168" width="1" height="9" fill="#1c1c1c"/>
<rect x="575" y="178" width="1" height="7" fill="#1c1c1c"/>
<rect x="560" y="174" width="1" height="6" fill="#1c1c1c"/>
<rect x="585" y="168" width="4" height="2" fill="#1c1c1c"/>
<path d="M529 175 L545 174 L553 176 L557 175" stroke="#a83010" stroke-width="2.2" fill="none"/>
<rect x="546" y="182" width="7" height="2" fill="#f0e800"/>
<rect x="624" y="101" width="1" height="1" fill="#e6e000"/>
<rect x="627" y="114" width="1" height="1" fill="#e6e000"/>
<rect x="607" y="117" width="1" height="1" fill="#e6e000"/>
<rect x="636" y="117" width="1" height="1" fill="#e6e000"/>
<rect x="623" y="119" width="1" height="1" fill="#1c1c1c"/>
<rect x="629" y="117" width="1" height="1" fill="#e6e000"/>
<rect x="620" y="95" width="1" height="1" fill="#1c1c1c"/>
<rect x="609" y="93" width="1" height="1" fill="#1c1c1c"/>
<rect x="601" y="118" width="1" height="1" fill="#1c1c1c"/>
<rect x="637" y="105" width="1" height="1" fill="#1c1c1c"/>
<rect x="618" y="132" width="1" height="1" fill="#1c1c1c"/>
<rect x="623" y="113" width="1" height="1" fill="#e6e000"/>
<rect x="619" y="128" width="1" height="1" fill="#e6e000"/>
<rect x="637" y="118" width="1" height="1" fill="#1c1c1c"/>
<rect x="623" y="111" width="1" height="1" fill="#e6e000"/>
<rect x="606" y="129" width="1" height="1" fill="#1c1c1c"/>
<rect x="614" y="104" width="1" height="1" fill="#1c1c1c"/>
<rect x="614" y="118" width="1" height="1" fill="#e6e000"/>
<rect x="602" y="99" width="1" height="1" fill="#1c1c1c"/>
<rect x="631" y="118" width="1" height="1" fill="#e6e000"/>
<rect x="617" y="97" width="1" height="1" fill="#1c1c1c"/>
<rect x="622" y="104" width="1" height="1" fill="#e6e000"/>
<rect x="631" y="103" width="1" height="1" fill="#1c1c1c"/>
<rect x="602" y="117" width="1" height="1" fill="#1c1c1c"/>
<rect x="592" y="104" width="1" height="1" fill="#1c1c1c"/>
<rect x="636" y="123" width="1" height="1" fill="#1c1c1c"/>
<rect x="649" y="121" width="1" height="1" fill="#e6e000"/>
<rect x="609" y="104" width="1" height="1" fill="#1c1c1c"/>
<rect x="614" y="115" width="1" height="1" fill="#e6e000"/>
<rect x="624" y="125" width="1" height="1" fill="#1c1c1c"/>
<rect x="620" y="101" width="1" height="1" fill="#1c1c1c"/>
<rect x="620" y="144" width="1" height="1" fill="#1c1c1c"/>
<rect x="629" y="97" width="1" height="1" fill="#1c1c1c"/>
<rect x="633" y="128" width="1" height="1" fill="#1c1c1c"/>
<rect x="627" y="112" width="1" height="1" fill="#e6e000"/>
<rect x="615" y="85" width="1" height="1" fill="#e6e000"/>
<rect x="623" y="100" width="1" height="1" fill="#1c1c1c"/>
<rect x="630" y="97" width="1" height="1" fill="#1c1c1c"/>
<rect x="619" y="111" width="1" height="1" fill="#1c1c1c"/>
<rect x="614" y="106" width="1" height="1" fill="#1c1c1c"/>
<rect x="619" y="113" width="1" height="1" fill="#e6e000"/>
<rect x="611" y="119" width="1" height="1" fill="#1c1c1c"/>
<rect x="595" y="130" width="1" height="1" fill="#1c1c1c"/>
<rect x="635" y="102" width="1" height="1" fill="#1c1c1c"/>
<rect x="601" y="105" width="1" height="1" fill="#1c1c1c"/>
<rect x="608" y="113" width="8" height="1" fill="#1c1c1c"/>
<rect x="611" y="113" width="1" height="14" fill="#1c1c1c"/>
<rect x="616" y="118" width="1" height="8" fill="#1c1c1c"/>
<rect x="622" y="113" width="10" height="1" fill="#1c1c1c"/>
<rect x="628" y="100" width="6" height="1" fill="#1c1c1c"/>
<rect x="600" y="99" width="6" height="1" fill="#1c1c1c"/>
<rect x="633" y="89" width="4" height="1" fill="#1c1c1c"/>
<rect x="613" y="138" width="8" height="2" fill="#f0e800"/><rect x="612" y="171" width="9" height="2" fill="#f0e800"/>
<path d="M599 163 L599 172 M600 167 L626 165 M601 170 L625 169 M530 72 L530 78 M583 88 L583 98 M645 98 L645 110" stroke="#1c1c1c" stroke-width="1" stroke-dasharray="1.5 1" fill="none"/>
<path d="M510 78 L510 86" stroke="#111" stroke-width="1.2"/>
<path d="M441.8 70.0 L507.6 66.4 L521.0 80.2 L520.3 143.5 L507.6 135.0" fill="none" stroke="#ff1010" stroke-width="1.2" shape-rendering="crispEdges" />
<path d="M441.8 70.0 L441.8 136.8 L455.0 136.8" fill="none" stroke="#ff1010" stroke-width="1.2" shape-rendering="crispEdges" />
<path d="M441.8 70.0 L458.6 82.7" fill="none" stroke="#ff1010" stroke-width="1.2" shape-rendering="crispEdges" />
<path d="M502.6 81.0 L521.0 80.2" fill="none" stroke="#ff1010" stroke-width="1.2" shape-rendering="crispEdges" />
<path d="M442.6 137.6 L452.0 141.9" fill="none" stroke="#ff1010" stroke-width="1.2" shape-rendering="crispEdges" />
<path d="M385.5 298.4 L431.8 293.6 L564.5 293.6 L564.5 298.2 L539.8 306.2" fill="none" stroke="#ff1010" stroke-width="1.1" shape-rendering="crispEdges" />
<path d="M539.8 298.8 L564.5 293.6" fill="none" stroke="#ff1010" stroke-width="1.0" shape-rendering="crispEdges" />
<path d="M387.0 330.8 L431.8 312.0 L564.5 313.0 L564.5 320.0 L539.8 338.8" fill="none" stroke="#ff1010" stroke-width="1.1" shape-rendering="crispEdges" />
<path d="M387.0 338.3 L431.8 320.5" fill="none" stroke="#ff1010" stroke-width="1.0" shape-rendering="crispEdges" />
<path d="M539.8 331.5 L564.5 313.0" fill="none" stroke="#ff1010" stroke-width="1.0" shape-rendering="crispEdges" />
<path d="M388.6 357.0 L431.8 337.0 L563.0 331.0 L563.0 340.0 L539.8 367.0" fill="none" stroke="#ff1010" stroke-width="1.1" shape-rendering="crispEdges" />
<path d="M388.6 366.0 L431.8 346.0" fill="none" stroke="#ff1010" stroke-width="1.0" shape-rendering="crispEdges" />
<path d="M539.8 358.0 L563.0 331.0" fill="none" stroke="#ff1010" stroke-width="1.0" shape-rendering="crispEdges" />
<path d="M408.7 346.5 L553.7 345.5 L545.0 350.5" fill="none" stroke="#f5f500" stroke-width="1.0" shape-rendering="crispEdges" />
<path d="M390.0 522.0 L432.0 499.0" fill="none" stroke="#9a9488" stroke-width="0.8" shape-rendering="crispEdges" />
<path d="M480.6 72.3 C484.9 72.2 489.4 72.8 493.0 73.8 C496.6 74.8 499.9 76.5 502.5 78.5 C505.1 80.5 507.1 83.1 508.5 86.0 C509.9 88.9 510.5 92.8 511.0 96.0 C511.5 99.2 511.4 102.2 511.5 105.0 C511.6 107.8 511.0 111.8 511.5 113.0 C512.0 114.2 513.6 111.3 514.5 112.0 C515.4 112.7 516.7 114.5 517.0 117.0 C517.3 119.5 517.2 124.0 516.5 127.0 C515.8 130.0 514.6 132.7 513.0 135.0 C511.4 137.3 508.5 138.5 507.0 141.0 C505.5 143.5 504.4 146.5 504.0 150.0 C503.6 153.5 503.5 158.5 504.5 162.0 C505.5 165.5 506.8 168.5 510.0 171.0 C513.2 173.5 518.0 175.2 524.0 177.0 C530.0 178.8 540.1 179.8 546.0 182.0 C551.9 184.2 555.7 186.8 559.5 190.0 C563.3 193.2 565.9 196.7 568.7 201.0 C571.5 205.3 574.7 210.6 576.5 215.6 C578.3 220.6 577.3 226.0 579.6 231.2 C581.9 236.4 586.1 241.1 590.5 246.8 C594.9 252.5 601.8 259.8 606.0 265.5 C610.2 271.2 612.4 275.3 615.5 281.0 C618.6 286.7 621.5 294.3 624.8 299.8 C628.0 305.3 631.3 308.3 635.0 314.0 C638.7 319.7 644.2 328.5 647.0 334.0 C649.8 339.5 650.9 342.2 652.0 347.0 C653.1 351.8 653.5 358.3 653.5 363.0 C653.5 367.7 652.9 371.5 652.0 375.0 C651.1 378.5 649.5 382.3 648.0 384.0 C646.5 385.7 644.6 385.2 643.0 385.0 C641.4 384.8 640.1 384.5 638.5 383.0 C636.9 381.5 634.8 380.3 633.5 376.0 C632.2 371.7 632.3 361.7 631.0 357.0 C629.7 352.3 627.2 349.5 625.5 348.0 C623.8 346.5 622.2 346.5 621.0 348.0 C619.8 349.5 619.5 354.7 618.5 357.0 C617.5 359.3 616.0 362.5 615.0 362.0 C614.0 361.5 613.0 358.0 612.8 354.0 C612.5 350.0 612.9 342.3 613.5 338.0 C614.1 333.7 617.5 331.8 616.5 328.0 C615.5 324.2 611.5 319.6 607.7 315.4 C603.9 311.2 597.5 306.9 593.6 303.0 C589.7 299.1 586.7 295.7 584.3 292.0 C581.9 288.3 581.1 284.9 579.0 281.0 C576.9 277.1 575.1 273.3 571.8 268.6 C568.5 263.9 563.2 258.2 559.3 253.0 C555.4 247.8 551.4 242.4 548.4 237.4 C545.4 232.4 543.3 221.9 541.5 223.0 C539.7 224.1 538.8 237.0 537.5 244.0 C536.2 251.0 535.0 259.0 534.0 265.0 C533.0 271.0 532.0 274.2 531.5 280.0 C531.0 285.8 530.8 291.7 530.7 300.0 C530.6 308.3 530.5 320.0 531.0 330.0 C531.5 340.0 532.9 352.0 533.8 360.0 C534.7 368.0 535.8 369.0 536.5 378.0 C537.2 387.0 538.0 404.8 538.3 414.0 C538.6 423.2 538.4 426.8 538.3 433.0 C538.1 439.2 537.8 445.0 537.4 451.0 C537.0 457.0 535.9 463.0 535.8 469.0 C535.6 475.0 536.0 481.5 536.5 487.0 C537.0 492.5 537.5 495.2 538.5 502.0 C539.5 508.8 542.0 519.5 542.5 528.0 C543.0 536.5 542.5 544.8 541.4 553.0 C540.3 561.2 537.1 569.0 536.0 577.0 C534.9 585.0 534.6 593.3 534.8 601.0 C535.0 608.7 536.2 615.2 537.0 623.0 C537.8 630.8 540.7 643.2 539.5 648.0 C538.3 652.8 533.0 652.0 530.0 652.0 C527.0 652.0 522.9 651.7 521.5 648.0 C520.1 644.3 521.8 636.7 521.6 630.0 C521.4 623.3 521.0 615.3 520.4 608.0 C519.8 600.7 519.3 593.3 518.2 586.0 C517.1 578.7 515.3 572.5 513.8 564.0 C512.3 555.5 511.1 544.5 509.4 535.0 C507.7 525.5 505.1 514.8 503.5 507.0 C501.9 499.2 500.7 494.3 499.5 488.0 C498.3 481.7 497.5 475.2 496.5 469.0 C495.5 462.8 495.1 457.0 493.7 451.0 C492.3 445.0 489.8 439.5 488.3 433.0 C486.9 426.5 485.8 417.5 485.0 412.0 C484.2 406.5 484.3 402.4 483.5 400.0 C482.7 397.6 481.2 397.7 480.0 397.5 C478.8 397.3 477.3 396.2 476.5 399.0 C475.7 401.8 475.8 408.3 475.0 414.0 C474.2 419.7 473.0 426.8 471.9 433.0 C470.8 439.2 469.4 445.0 468.3 451.0 C467.2 457.0 466.1 463.0 465.5 469.0 C464.9 475.0 464.9 481.5 464.6 487.0 C464.4 492.5 464.3 495.8 464.0 502.0 C463.7 508.2 463.7 516.7 463.0 524.0 C462.3 531.3 461.2 538.7 459.7 546.0 C458.2 553.3 455.7 560.7 454.2 568.0 C452.7 575.3 451.4 582.7 450.9 590.0 C450.3 597.3 450.7 604.7 450.9 612.0 C451.1 619.3 452.3 628.3 452.0 634.0 C451.7 639.7 451.3 643.5 449.0 646.0 C446.7 648.5 442.0 649.2 438.0 649.0 C434.0 648.8 426.2 649.3 425.0 645.0 C423.8 640.7 429.4 630.3 431.0 623.0 C432.6 615.7 433.9 608.3 434.3 601.0 C434.7 593.7 433.9 586.3 433.2 579.0 C432.5 571.7 431.0 564.3 429.9 557.0 C428.8 549.7 427.0 544.2 426.6 535.0 C426.2 525.8 427.1 510.0 427.7 502.0 C428.3 494.0 429.9 492.5 430.0 487.0 C430.1 481.5 428.9 475.0 428.2 469.0 C427.4 463.0 426.4 457.0 425.5 451.0 C424.6 445.0 423.3 439.2 422.7 433.0 C422.1 426.8 421.8 420.2 421.8 414.0 C421.8 407.8 422.2 402.0 422.7 396.0 C423.2 390.0 423.8 384.0 424.6 378.0 C425.4 372.0 426.5 368.0 427.3 360.0 C428.1 352.0 429.0 340.0 429.6 330.0 C430.2 320.0 430.6 308.3 430.7 300.0 C430.8 291.7 430.0 285.8 429.9 280.0 C429.8 274.2 430.4 269.8 430.3 265.0 C430.2 260.2 429.9 256.0 429.2 251.0 C428.5 246.0 427.4 239.6 426.0 235.0 C424.6 230.4 421.6 223.3 421.0 223.5 C420.4 223.7 423.1 229.9 422.5 236.0 C421.9 242.1 420.3 253.4 417.4 260.0 C414.5 266.6 409.1 270.8 404.9 275.8 C400.7 280.8 397.1 285.2 392.4 289.9 C387.7 294.6 382.0 300.4 376.8 304.0 C371.6 307.6 366.4 309.1 361.2 311.7 C356.0 314.3 350.6 317.2 345.6 319.5 C340.6 321.8 334.1 323.6 331.4 325.4 C328.7 327.1 330.4 327.2 329.5 330.0 C328.6 332.8 327.1 338.0 326.0 342.0 C324.9 346.0 323.9 351.5 322.6 354.0 C321.3 356.5 319.1 358.5 318.0 357.0 C316.9 355.5 317.3 346.3 316.0 345.0 C314.7 343.7 312.2 347.2 310.4 349.0 C308.6 350.8 306.2 352.8 305.0 356.0 C303.8 359.2 303.9 365.2 303.2 368.5 C302.4 371.8 301.5 374.7 300.5 375.5 C299.5 376.3 298.0 375.4 297.0 373.5 C296.0 371.6 294.7 367.1 294.4 364.0 C294.1 360.9 294.2 358.3 295.0 355.0 C295.8 351.7 297.7 347.3 299.4 344.0 C301.1 340.7 302.6 338.9 305.0 335.4 C307.4 331.9 310.7 326.9 313.7 323.2 C316.7 319.5 320.3 316.5 323.0 313.0 C325.7 309.5 325.4 307.6 330.0 302.4 C334.6 297.2 343.8 288.5 350.3 282.0 C356.8 275.5 363.8 268.6 369.0 263.4 C374.2 258.2 378.2 254.9 381.5 251.0 C384.8 247.1 386.7 243.7 389.0 240.0 C391.3 236.3 394.0 232.7 395.5 229.0 C397.0 225.3 396.9 221.8 398.0 218.0 C399.1 214.2 400.3 210.1 402.0 206.0 C403.7 201.9 405.9 196.8 408.4 193.4 C410.9 190.0 412.9 188.1 417.0 185.5 C421.1 182.9 427.8 179.9 433.0 178.0 C438.2 176.1 443.7 175.2 448.0 174.0 C452.3 172.8 456.5 172.8 458.6 171.0 C460.7 169.2 460.1 166.0 460.5 163.0 C460.9 160.0 461.7 156.1 460.8 153.0 C459.9 149.9 456.8 147.8 455.3 144.4 C453.8 141.0 452.8 137.4 452.0 132.6 C451.2 127.8 450.7 121.1 450.5 115.7 C450.3 110.3 450.5 104.5 451.0 100.0 C451.5 95.5 452.2 92.2 453.5 89.0 C454.8 85.8 456.2 82.9 458.5 80.5 C460.8 78.1 463.8 75.9 467.5 74.5 C471.2 73.1 476.4 72.4 480.6 72.3 Z" fill="#a7a7a7" filter="url(#inner)"/>
<g clip-path="url(#bclip)"><path d="M421.0 223.5 C421.2 225.6 423.1 229.9 422.5 236.0 C421.9 242.1 420.3 253.4 417.4 260.0 C414.5 266.6 409.1 270.8 404.9 275.8 C400.7 280.8 397.1 285.2 392.4 289.9 C387.7 294.6 382.0 300.4 376.8 304.0 C371.6 307.6 366.4 309.1 361.2 311.7 C356.0 314.3 350.6 317.2 345.6 319.5 C340.6 321.8 333.8 324.4 331.4 325.4" fill="none" stroke="#0a0a0a" stroke-width="1.8"/>
<path d="M616.5 328.0 C615.0 325.9 611.5 319.6 607.7 315.4 C603.9 311.2 597.5 306.9 593.6 303.0 C589.7 299.1 586.7 295.7 584.3 292.0 C581.9 288.3 581.1 284.9 579.0 281.0 C576.9 277.1 575.1 273.3 571.8 268.6 C568.5 263.9 563.2 258.2 559.3 253.0 C555.4 247.8 551.4 242.4 548.4 237.4 C545.4 232.4 542.6 225.4 541.5 223.0" fill="none" stroke="#0a0a0a" stroke-width="1.8"/>
<g filter="url(#blur4)" fill="#5a5a5a" opacity="0.55"><path d="M420 225 L436 240 L438 300 L434 380 L424 380 L426 300 Z"/><path d="M542 224 L526 245 L524 300 L530 380 L540 380 L536 300 Z"/></g>
<g filter="url(#blur4)" fill="#666" opacity="0.5"><path d="M451 100 L458 100 L460 140 L455 145 Z"/><path d="M510 95 L502 100 L500 140 L506 142 Z"/></g>
<g filter="url(#blur2)" opacity="0.55"><ellipse cx="462" cy="106" rx="7" ry="3" fill="#7a7a7a"/><ellipse cx="486" cy="105" rx="7" ry="3" fill="#7a7a7a"/><ellipse cx="474" cy="120" rx="3" ry="7" fill="#888"/><ellipse cx="472" cy="141" rx="8" ry="2.5" fill="#8a8a8a"/></g>
<g fill="#3e3e3e"><path d="M457 110 Q462 107 467 110 Q462 112 457 110 Z"/><path d="M481 109 Q486 106 491 109 Q486 111 481 109 Z"/></g>
<g fill="#d0d0d0" opacity="0.6"><circle cx="462" cy="109.6" r="1"/><circle cx="486" cy="108.6" r="1"/></g>
<g filter="url(#blur2)" opacity="0.7"><path d="M476 110 L480 123 L474 124 Z" fill="#777"/></g>
<g fill="#2e2e2e"><ellipse cx="467.5" cy="126" rx="2.2" ry="1.3"/><ellipse cx="478.5" cy="126" rx="2.2" ry="1.3"/></g><path d="M465 124 Q472 129 481 124" fill="none" stroke="#555" stroke-width="1"/>
<path d="M463 137.5 Q473 135.5 484 137.5" fill="none" stroke="#333" stroke-width="1.4"/>
<path d="M509 117 Q513 124 510 133" fill="none" stroke="#6a6a6a" stroke-width="1.5"/>
<g filter="url(#blur4)" opacity="0.45"><path d="M500 90 L510 100 L508 140 L498 145 Z" fill="#555"/></g>
<path d="M458 149 Q466 157 477 158.5 Q492 157.5 503 146 Q494 161 477 162.5 Q464 160 458 149 Z" fill="#0a0a0a"/>
<path d="M462 160 Q476 168 502 154" fill="none" stroke="#6a6a6a" stroke-width="3" filter="url(#blur2)" opacity="0.5"/>
<path d="M420 223 Q423 223.5 424.5 227 L426 233" fill="none" stroke="#222" stroke-width="1.3"/><circle cx="421.8" cy="224.2" r="1.6" fill="#151515"/>
<path d="M543 222 Q540 223 539 227 L537 236" fill="none" stroke="#222" stroke-width="1.3"/><circle cx="541.5" cy="223.2" r="1.6" fill="#151515"/>
<g filter="url(#blur4)" fill="#505050" opacity="0.45"><path d="M421 230 L418 258 L396 284 L364 309 L345 319 L352 305 L386 280 L410 252 Z"/><path d="M546 232 L558 252 L582 286 L612 320 L602 320 L576 292 L552 258 Z"/></g>
<g filter="url(#blur4)" opacity="0.45"><path d="M462 158 Q480 170 502 156 L502 172 Q480 180 462 172 Z" fill="#6a6a6a"/></g>
<g fill="none" stroke="#7c7c7c" stroke-width="1.5" opacity="0.6" filter="url(#blur2)"><path d="M466 160 L478 178"/><path d="M498 160 L486 178"/></g>
<g fill="none" stroke="#858585" stroke-width="2" opacity="0.55" filter="url(#blur2)"><path d="M434 181 Q452 184 476 180"/><path d="M484 180 Q510 184 534 181"/><path d="M431 245 Q446 249 460 248 Q470 247 478 245"/><path d="M481 239 Q496 250 512 249 Q526 246 536 232"/><path d="M434 185 Q437 205 440 225"/><path d="M529 186 Q525 205 522 222"/></g>
<g fill="none" stroke="#7a7a7a" stroke-width="1.5" opacity="0.35" filter="url(#blur2)"><path d="M479 200 L479 250"/><path d="M465 300 Q479 304 495 300"/><path d="M463 330 Q479 334 497 330"/></g>
<g filter="url(#blur2)" opacity="0.55"><path d="M440 362 Q458 370 466 386" fill="none" stroke="#6c6c6c" stroke-width="3"/><path d="M516 362 Q500 370 492 388" fill="none" stroke="#6c6c6c" stroke-width="3"/></g>
<g filter="url(#blur2)" opacity="0.8"><path d="M467 394 Q478 402 490 394 L488 401 L470 401 Z" fill="#444"/></g>
<ellipse cx="478.5" cy="386" rx="8.5" ry="11" fill="#adadad" filter="url(#blur2)"/>
<g fill="none" stroke="#606060" stroke-width="0.9" opacity="0.8"><path d="M637 352 Q637 368 636.5 380"/><path d="M642 350 Q643 368 642.5 383"/><path d="M647 350 Q648 366 647.5 382"/><path d="M300 348 Q298 360 298.5 372"/><path d="M305 344 Q302 356 302 370"/></g>
<g fill="none" stroke="#777" stroke-width="1.5" opacity="0.6" filter="url(#blur2)"><path d="M436 505 Q446 515 458 505"/><path d="M500 500 Q512 512 532 502"/><path d="M498 485 L510 522"/></g>
<g filter="url(#blur4)" fill="#585858" opacity="0.45"><path d="M462 420 L476 405 L470 460 L462 500 L455 500 L460 460 Z"/><path d="M487 410 L500 440 L508 500 L500 500 L492 455 Z"/><path d="M440 500 L452 500 L455 520 L446 535 Z"/><path d="M505 505 L515 510 L520 540 L510 540 Z"/></g></g>
<path d="M423 626 L450 626 L452 634 L456 640 L448 657 Q440 667 426 666 Q410 665 405 655 L407 646 L416 636 Z" fill="#3a3a3a"/>
<path d="M423 626 L450 626 L450 634 L444 640 L438 652 L432 657 L422 657 L412 652 L408 646 L414 640 L420 634 Z" fill="#9c9c9c"/>
<path d="M411 646 L415 641 M414 650 L419 644 M418 653 L423 647" stroke="#707070" stroke-width="0.8"/>
<path d="M407 657 Q414 665 428 665.5 Q441 664 448 655 L455 643" fill="none" stroke="#2a80c0" stroke-width="2"/>
<path d="M418 636 Q432 640 447 637" fill="none" stroke="#111" stroke-width="2.4"/>
<path d="M420 637 L426 645 L429 651 L434 641 L444 637" fill="none" stroke="#1f6aa8" stroke-width="2.6"/>
<path d="M511 642 L541 642 L543 652 L543 668 Q525 677 507 669 L508 655 Z" fill="#3a3a3a"/>
<path d="M512 643 L540 643 L542 652 L541.5 661 L536 664 L514 664 L509 658 L509 649 Z" fill="#9c9c9c"/>
<path d="M525 652 L525 662 M530 651 L530 662 M535 651 L535 661 M516 652 L516 662" stroke="#707070" stroke-width="0.8"/>
<path d="M508 669 Q524 675 540 668" fill="none" stroke="#2a80c0" stroke-width="2.4"/>
<path d="M511 643.5 L541 644.5" stroke="#111" stroke-width="2.4"/>
<path d="M513 645 L519 652 L521 665 M521 652 L528 645.5 L539 645" fill="none" stroke="#1f6aa8" stroke-width="2.4"/>
<path d="M507.6 66.4 L507.6 134.3 L493.3 134.3" fill="none" stroke="#ff1010" stroke-width="1.2" shape-rendering="crispEdges" />
<path d="M452 140 Q454 146 460 147" fill="none" stroke="#f5f500" stroke-width="1.2"/>
<path d="M505 139 Q520 141 518 146 Q510 149 503 147" fill="none" stroke="#f5f500" stroke-width="1.2"/>
<path d="M385.5 266.7 L564.5 268.0 L564.5 276.0 L385.5 274.5 Z" fill="none" stroke="#ff1010" stroke-width="1.2" shape-rendering="crispEdges" />
<path d="M539.8 266.5 L539.8 275.0" fill="none" stroke="#ff1010" stroke-width="1.0" shape-rendering="crispEdges" />
<path d="M385.5 270.0 L539.8 270.5" fill="none" stroke="#ff1010" stroke-width="0.8" shape-rendering="crispEdges" />
<path d="M402.5 270.2 L558.3 271.2" fill="none" stroke="#f5f500" stroke-width="1.3" shape-rendering="crispEdges" />
<path d="M410 270 L440 270.6 L432 272 Z M525 271 L555 271.5 L545 272.6 Z" fill="#f5f500"/>
<path d="M385.5 298.4 L539.8 298.8 L539.8 306.2 L385.5 305.8 Z" fill="none" stroke="#ff1010" stroke-width="1.1" shape-rendering="crispEdges" />
<path d="M387.0 330.8 L539.8 331.5 L539.8 338.8 L387.0 338.3 Z" fill="none" stroke="#ff1010" stroke-width="1.1" shape-rendering="crispEdges" />
<path d="M388.6 357.0 L539.8 358.0 L539.8 367.0 L388.6 366.0 Z" fill="none" stroke="#ff1010" stroke-width="1.1" shape-rendering="crispEdges" />
<path d="M336.2 364.7 L604.6 353.0 L575.3 368.8 Z" fill="none" stroke="#f5f500" stroke-width="1.2" shape-rendering="crispEdges" />
<path d="M408.7 346.5 L410.0 351.0 L545.0 350.5" fill="none" stroke="#f5f500" stroke-width="1.0" shape-rendering="crispEdges" />
<path d="M465.5 400.0 L469.0 417.0 L486.0 417.0 L488.0 400.0" fill="none" stroke="#f5f500" stroke-width="1.2" shape-rendering="crispEdges" />
<path d="M478.0 405.0 L477.0 413.0 L484.0 412.0" fill="none" stroke="#f5f500" stroke-width="1.0" shape-rendering="crispEdges" />
<g fill="none" stroke="#0ea84a" stroke-width="1.2"><circle cx="410" cy="163.5" r="8"/><path d="M402 163 L418 163 M406 156 L406 171 M414 156 L414 171"/></g>
<g fill="none" stroke="#1010f0" stroke-width="1.3"><circle cx="562.8" cy="158.4" r="8"/><path d="M555 158 L571 158 M562 150.5 L562 166 M557 154 L558 163"/></g>
<path d="M396.0 229.6 L317.0 316.0" fill="none" stroke="#13a050" stroke-width="0.9" shape-rendering="crispEdges" />
<path d="M351.8 284.0 L300.0 337.0" fill="none" stroke="#13a050" stroke-width="0.9" shape-rendering="crispEdges" />
<path d="M384.0 279.0 L332.0 326.0" fill="none" stroke="#13a050" stroke-width="0.9" shape-rendering="crispEdges" />
<path d="M317.0 316.0 L300.0 336.5 L304.0 340.0" fill="none" stroke="#13a050" stroke-width="0.9" shape-rendering="crispEdges" />
<path d="M318.0 316.6 L330.3 326.5 L345.0 314.0" fill="none" stroke="#13a050" stroke-width="0.9" shape-rendering="crispEdges" />
<path d="M362.5 271.3 L364 266 L365.6 263 L372 259.5 L378 256.4 M365.6 263 L395.3 284.5 M372.7 275 L382.8 263.4 M368.7 266.6 L371 268 M391.4 288.4 L397.7 281.4" fill="none" stroke="#10f010" stroke-width="1.1" shape-rendering="crispEdges"/>
<path d="M305 333 L322 321 M318 322 L330 327" fill="none" stroke="#10f010" stroke-width="2"/>
<path d="M298 373 L301 376 M309 342 L314 347" fill="none" stroke="#f5f500" stroke-width="1.5"/>
<path d="M574.4 227.0 L631.0 316.0" fill="none" stroke="#1010f0" stroke-width="1.1" shape-rendering="crispEdges" />
<path d="M584.0 276.6 L619.0 328.5" fill="none" stroke="#1010f0" stroke-width="1.1" shape-rendering="crispEdges" />
<path d="M614.0 286.5 L653.4 343.0" fill="none" stroke="#1010f0" stroke-width="1.1" shape-rendering="crispEdges" />
<path d="M619.0 327.0 L631.0 318.0 L653.0 343.0 L642.0 343.0 L625.0 337.0 L619.0 327.0" fill="none" stroke="#1010f0" stroke-width="1.1" shape-rendering="crispEdges" />
<path d="M578 281 L576 276 L579 268 L590 262 L598 258.5 L606 258 L611 263 L614 273 M580 272 L604 262 M586 263 L591 273 M578 281 L582 282" fill="none" stroke="#5ad2f0" stroke-width="1.1" shape-rendering="crispEdges"/>
<path d="M622 325 Q632 323 640 330 L648 338 L632 332 Z" fill="#5ad2f0" fill-opacity="0.6" stroke="#5ad2f0" stroke-width="1"/>
<path d="M634 383 L640 377 M641 384 L644 378 M647 384 L649 379 M617 363 L619 358" fill="none" stroke="#1010f0" stroke-width="1.6"/>
<path d="M634 383 L636 385 M641 385 L643 386 M647 385 L649 386 M616 361 L618 363" fill="none" stroke="#f5f500" stroke-width="1.6"/>
<path d="M427.7 472 L418.7 494 L429 511 M464.7 477 L471 494 L462 516 M421 497 L446 499 L470 498 M436.6 480 L436.6 518.5 L440 519 M454.5 518.5 L462 516 M418 491 L430 488 M462 490 L471 490" fill="none" stroke="#10f010" stroke-width="1.1"/>
<path d="M368.3 509 L401.5 510 L401.5 543.5 L368.3 543 Z M368.3 509 L401.5 543.5 M401.5 510 L368.3 543 M368.3 509 L380 524 L401.5 543.5 M368.3 509 L390 522" fill="none" stroke="#10f010" stroke-width="1.1"/>
<path d="M497 478.8 L490 498 L498.1 515 M534.4 475.3 L538.5 477 L547.3 496.3 L537.9 517.4 M490 498 L491 499.5 L498 503.3 L507 504.5 L530.3 503.3 L547.3 496.3 M490 498 L499.3 493.4 M534.4 491.6 L540 492 L547.3 496.3 M516.5 482.9 L518 523.8" fill="none" stroke="#5ad2f0" stroke-width="1.1" shape-rendering="crispEdges"/>
<path d="M492.3 515 L528 517 L528 551.9 L492.3 550.5 Z M492.3 515 L528 551.9 M528 517 L492.3 550.5 M492.3 515 L510 520 M493.5 517 L526.5 551" fill="none" stroke="#5ad2f0" stroke-width="1.1" shape-rendering="crispEdges"/>
<g fill="none" stroke="#10f010" stroke-width="1.1"><path d="M425 598 L429 593 L460 594 L465 600 L465 628 L460 634 L430 632 L424 628 Z"/><path d="M429 593 L428 632 M460 594 L459 634 M424 610 L465 612 M453 600 L453 628 M436 618 L458 619"/></g>
<g fill="none" stroke="#5ad2f0" stroke-width="1.1"><path d="M507 605 L511 600 L540 601 L543 606 L542 634 L538 639 L511 638 L506 634 Z"/><path d="M511 600 L510 638 M538 601 L537 639 M514 610 L514 634 M520 609 L540 609 M518 626 L537 627 M535 605 L535 636"/></g>
<path d="M392.9 654.9 L408.0 646.7 L457.0 646.7 L460.7 654.9 L438.5 664.0 L408.0 663.0 Z" fill="none" stroke="#10f010" stroke-width="1.1" shape-rendering="crispEdges" />
<g fill="none" stroke="#13a050" stroke-width="1.1"><path d="M405.3 637 L412 632.7 L442 633.5 L442 668 L436 672.4 L406 670 Z M412 632.7 L412 666 M406 670 L412 666 L442 668"/></g>
<path d="M490.0 662.0 L498.0 651.4 L546.0 653.7 L558.0 663.0 L545.0 673.6 L500.5 673.6 Z" fill="none" stroke="#5ad2f0" stroke-width="1.1" shape-rendering="crispEdges" />
<path d="M502.9 641.3 L538 641.3 L538 680 L502.9 678 Z M506 645 L536 645" fill="none" stroke="#1010f0" stroke-width="1.4"/>
<path d="M426.6 625.6 L438.6 625.6 M432.6 619.6 L432.6 631.6" stroke="#f5f500" stroke-width="1"/><circle cx="432.6" cy="625.6" r="2.8" fill="#f5f500"/>
<path d="M441.9 652.5 L453.9 652.5 M447.9 646.5 L447.9 658.5" stroke="#f5f500" stroke-width="1"/><circle cx="447.9" cy="652.5" r="2.8" fill="#f5f500"/>
<path d="M509.70000000000005 632.7 L521.7 632.7 M515.7 626.7 L515.7 638.7" stroke="#f5f500" stroke-width="1"/><circle cx="515.7" cy="632.7" r="2.8" fill="#f5f500"/>
<path d="M493.4 657 L505.4 657 M499.4 651 L499.4 663" stroke="#f5f500" stroke-width="1"/><circle cx="499.4" cy="657" r="2.8" fill="#f5f500"/>
<path d="M539 659.6 L551 659.6 M545 653.6 L545 665.6" stroke="#f5f500" stroke-width="1"/><circle cx="545" cy="659.6" r="2.8" fill="#f5f500"/>
<path d="M478 647 L488 647 M480 644 L486 644 L486 650 M479 650 L489 650" stroke="#ff1010" stroke-width="1.5" fill="none"/><rect x="481" y="639" width="4" height="5" fill="#1010f0"/>
<path d="M390.3 755.0 L400.3 752.0 M391.8 751.0 L398.8 756.0 M390.3 753.5 L393.3 753.5" stroke="#10f010" stroke-width="1.6" fill="none"/><rect x="393.6" y="751.8" width="3.4" height="3.4" fill="#ff1010"/>
<path d="M410.1 749.3 L420.1 746.3 M411.6 745.3 L418.6 750.3 M410.1 747.8 L413.1 747.8" stroke="#f5f500" stroke-width="1.6" fill="none"/><rect x="413.40000000000003" y="746.0999999999999" width="3.4" height="3.4" fill="#ff1010"/>
<path d="M405 756.9 L415 753.9 M406.5 752.9 L413.5 757.9 M405 755.4 L408 755.4" stroke="#f5f500" stroke-width="1.6" fill="none"/><rect x="408.3" y="753.6999999999999" width="3.4" height="3.4" fill="#ff1010"/>
<path d="M420.3 758.8 L430.3 755.8 M421.8 754.8 L428.8 759.8 M420.3 757.3 L423.3 757.3" stroke="#5ad2f0" stroke-width="1.6" fill="none"/><rect x="423.6" y="755.5999999999999" width="3.4" height="3.4" fill="#ff1010"/>
<path d="M392.9 765.9 L402.9 762.9 M394.4 761.9 L401.4 766.9 M392.9 764.4 L395.9 764.4" stroke="#10f010" stroke-width="1.6" fill="none"/><rect x="396.2" y="762.6999999999999" width="3.4" height="3.4" fill="#ff1010"/>
<path d="M405 766.5 L415 763.5 M406.5 762.5 L413.5 767.5 M405 765 L408 765" stroke="#5ad2f0" stroke-width="1.6" fill="none"/><rect x="408.3" y="763.3" width="3.4" height="3.4" fill="#ff1010"/>
<text x="17.8" y="758.3" font-family="Liberation Sans" font-weight="bold" font-size="8.5" fill="#1515ff">z</text><rect x="19.8" y="762" width="1.3" height="7" fill="#1515ff"/><text x="21.5" y="771.8" font-family="Liberation Sans" font-weight="bold" font-size="8.5" fill="#15d015">y</text>
</svg>
</body></html>
